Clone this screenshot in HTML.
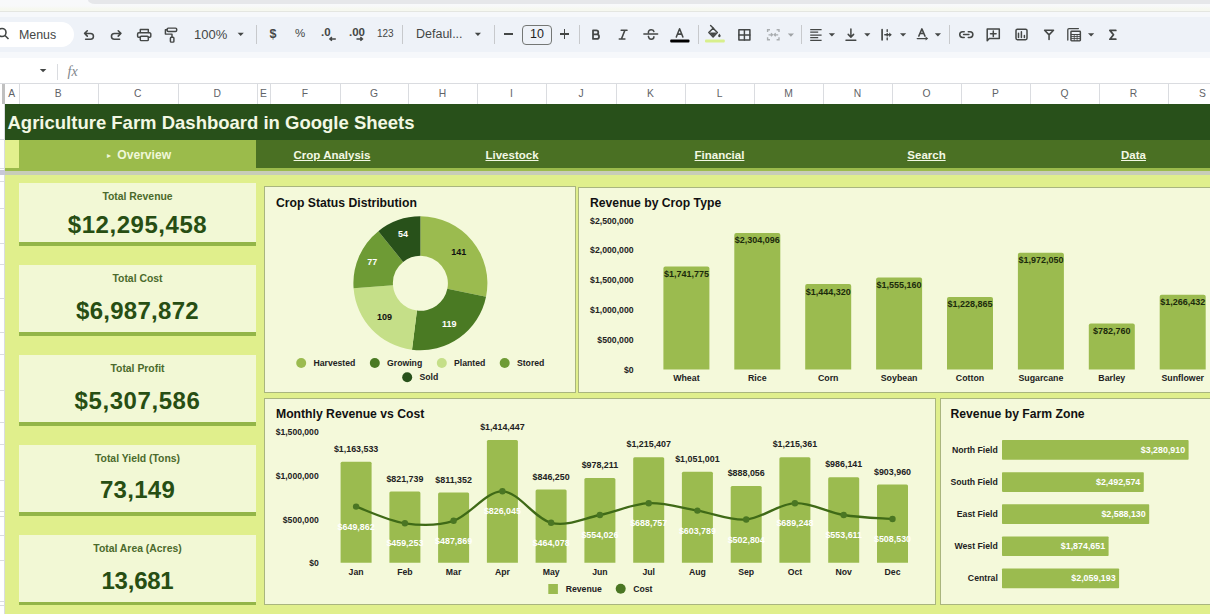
<!DOCTYPE html><html><head><meta charset="utf-8"><style>
*{box-sizing:border-box}
body{margin:0;width:1210px;height:614px;overflow:hidden;position:relative;background:#fff;font-family:"Liberation Sans",sans-serif}
.a{position:absolute}
.t{position:absolute;white-space:nowrap;line-height:1}
.ic{position:absolute;overflow:visible}
</style></head><body>
<div class="a" style="left:0;top:0;width:1210px;height:11px;background:linear-gradient(#f8f9fb 0,#f8f9fa 6px,#f6f8f0 9px,#f6f8f0 11px)"></div>
<div class="a" style="left:88px;top:0;width:1122px;height:4px;background:#e6e7ea;border-bottom-left-radius:7px 4px"></div>
<div class="a" style="left:0;top:11px;width:1210px;height:1px;background:#e4e6e1"></div>
<div class="a" style="left:0;top:12px;width:1210px;height:46px;background:#f6f8fb"></div>
<div class="a" style="left:0;top:17px;width:1210px;height:35px;background:#eef2f8"></div>
<div class="a" style="left:-20px;top:22px;width:94px;height:25px;background:#fff;border-radius:13px"></div>
<svg class="ic" style="left:0;top:28px" width="10" height="14" viewBox="0 0 10 14"><circle cx="2" cy="4.5" r="4" fill="none" stroke="#444746" stroke-width="1.6"/><path d="M5 7.5 L8.5 11" stroke="#444746" stroke-width="1.6"/></svg>
<div class="t" style="left:19px;top:28.5px;font-size:12.4px;color:#444746">Menus</div>
<svg class="a" style="left:0;top:0" width="1210" height="60" viewBox="0 0 1210 60"><path d="M85.6 39.3 H90.5 A2.95 2.95 0 0 0 90.5 33.4 H84.6 M87.3 30.8 L84.6 33.4 L87.3 36.1" fill="none" stroke="#444746" stroke-width="1.55" stroke-linecap="round" stroke-linejoin="round"/><path d="M119.6 39.3 H114.4 A2.95 2.95 0 0 1 114.4 33.4 H120.9 M118.2 30.8 L120.9 33.4 L118.2 36.1" fill="none" stroke="#444746" stroke-width="1.55" stroke-linecap="round" stroke-linejoin="round"/><path d="M140.3 32.6 V29.4 H148.3 V32.6" fill="none" stroke="#444746" stroke-width="1.45" stroke-linecap="round" stroke-linejoin="round"/><path d="M140.2 37.3 H138.6 A1 1 0 0 1 137.6 36.3 V34 A1.2 1.2 0 0 1 138.8 32.8 H149.6 A1.2 1.2 0 0 1 150.8 34 V36.3 A1 1 0 0 1 149.8 37.3 H148.4" fill="none" stroke="#444746" stroke-width="1.45" stroke-linecap="round" stroke-linejoin="round"/><rect x="140.3" y="36.3" width="8" height="4.3" rx="0.9" fill="none" stroke="#444746" stroke-width="1.45" stroke-linecap="round" stroke-linejoin="round"/><rect x="167.1" y="28.1" width="9.6" height="3.4" rx="1.2" fill="none" stroke="#444746" stroke-width="1.45" stroke-linecap="round" stroke-linejoin="round"/><path d="M167.1 29.8 H165.4 V34.1 H172 V37.1" fill="none" stroke="#444746" stroke-width="1.45" stroke-linecap="round" stroke-linejoin="round"/><rect x="170.4" y="37.3" width="3.5" height="4.8" rx="0.9" fill="none" stroke="#444746" stroke-width="1.45" stroke-linecap="round" stroke-linejoin="round"/><path d="M237.6 32.8 H243.79999999999998 L240.7 36.099999999999994 Z" fill="#444746"/><path d="M474.8 32.8 H481.0 L477.90000000000003 36.099999999999994 Z" fill="#444746"/><path d="M787.8 33.4 H794.0 L790.9 36.699999999999996 Z" fill="#9fa3a6"/><path d="M828.8 33.2 H835.0 L831.9 36.5 Z" fill="#444746"/><path d="M864.2 33.2 H870.4000000000001 L867.3000000000001 36.5 Z" fill="#444746"/><path d="M900 33.2 H906.2 L903.1 36.5 Z" fill="#444746"/><path d="M934.8 33.2 H941.0 L937.9 36.5 Z" fill="#444746"/><path d="M1088 33.2 H1094.2 L1091.1 36.5 Z" fill="#444746"/><path d="M643.9 34.1 H657.6" fill="none" stroke="#444746" stroke-width="1.5" stroke-linecap="round" stroke-linejoin="round"/><path d="M648.4 32.9 C648.2 30.8 649.6 29.8 651.1 29.8 C652.5 29.8 653.6 30.4 653.9 31.5" fill="none" stroke="#444746" stroke-width="1.55" stroke-linecap="round" stroke-linejoin="round"/><path d="M648.4 36.4 C648.8 38.5 650 39.3 651.2 39.3 C652.8 39.3 653.9 38.2 653.9 36.8" fill="none" stroke="#444746" stroke-width="1.55" stroke-linecap="round" stroke-linejoin="round"/><path d="M593 30.4 V38.9 H596.8 A2.25 2.25 0 0 0 596.8 34.4 H593 M593 34.4 H596.3 A2 2 0 0 0 596.3 30.4 H593" fill="none" stroke="#444746" stroke-width="1.75" stroke-linecap="round" stroke-linejoin="round"/><path d="M621.2 30.3 H627 M619.3 39 H624.9 M624.9 30.3 L621.4 39" fill="none" stroke="#444746" stroke-width="1.6" stroke-linecap="round" stroke-linejoin="round"/><path d="M676.3 37 L679.6 28.7 L682.9 37 M677.5 34.1 H681.7" fill="none" stroke="#444746" stroke-width="1.55" stroke-linecap="round" stroke-linejoin="round"/><rect x="670.2" y="39.4" width="19.3" height="3" rx="1" fill="#000"/><path d="M708.8 32.6 L713.1 28.3 L717.4 32.6 L713.1 36.9 Z" fill="none" stroke="#444746" stroke-width="1.45" stroke-linecap="round" stroke-linejoin="round"/><path d="M709.3 32.6 H716.9 L713.1 36.4 Z" fill="#444746"/><path d="M710.6 25.6 L713.6 28.6" fill="none" stroke="#444746" stroke-width="1.45" stroke-linecap="round" stroke-linejoin="round"/><path d="M719.4 33.6 L718.3 35.3 A1.25 1.25 0 1 0 720.5 35.3 Z" fill="#444746"/><rect x="705" y="39.6" width="19.8" height="3" rx="1" fill="#d8ef8c"/><rect x="738.9" y="29.8" width="11" height="10.2" fill="none" stroke="#444746" stroke-width="1.55" stroke-linecap="round" stroke-linejoin="round"/><path d="M744.4 29.8 V40 M738.9 34.9 H749.9" fill="none" stroke="#444746" stroke-width="1.45" stroke-linecap="round" stroke-linejoin="round"/><path d="M767.6 32 V29.7 H770 M776.6 29.7 H779 V32 M779 37.3 V39.8 H776.6 M770 39.8 H767.6 V37.3" fill="none" stroke="#a9adb0" stroke-width="1.4"/><path d="M768.5 34.8 H772 M771 33.3 L772.5 34.8 L771 36.3 M778.2 34.8 H774.7 M775.7 33.3 L774.2 34.8 L775.7 36.3" fill="none" stroke="#a9adb0" stroke-width="1.3"/><path d="M810.2 29.5 H821.6 M810.2 32.2 H818.2 M810.2 35 H821.6 M810.2 37.7 H818.2 M810.2 40.4 H821.6" fill="none" stroke="#444746" stroke-width="1.25"/><path d="M850.9 29 V37 M848.2 34.4 L850.9 37.1 L853.6 34.4 M846 40.3 H855.8" fill="none" stroke="#444746" stroke-width="1.5" stroke-linecap="round" stroke-linejoin="round"/><path d="M882.1 29.7 V39.8" fill="none" stroke="#444746" stroke-width="1.7" stroke-linecap="round" stroke-linejoin="round"/><path d="M887.2 29.8 V31.4 M887.2 33.4 V35.9 M887.2 37.9 V39.7" fill="none" stroke="#444746" stroke-width="1.4" stroke-linecap="round" stroke-linejoin="round"/><path d="M884.8 34.7 H889.6" fill="none" stroke="#444746" stroke-width="1.4" stroke-linecap="round" stroke-linejoin="round"/><path d="M889.2 32.5 L891.8 34.7 L889.2 36.9 Z" fill="#444746"/><path d="M918.8 36.1 L921.9 28.9 L925 36.1 M919.9 33.6 H923.9" fill="none" stroke="#444746" stroke-width="1.5" stroke-linecap="round" stroke-linejoin="round"/><path d="M917.3 38.6 H926" fill="none" stroke="#444746" stroke-width="1.4" stroke-linecap="round" stroke-linejoin="round"/><path d="M925.6 36.6 L928.2 38.6 L925.6 40.6 Z" fill="#444746"/><path d="M964.2 31.7 H962.6 A2.85 2.85 0 0 0 962.6 37.4 H964.2 M968.3 31.7 H970 A2.85 2.85 0 0 1 970 37.4 H968.3 M963.6 34.55 H968.9" fill="none" stroke="#444746" stroke-width="1.55" stroke-linecap="round" stroke-linejoin="round"/><path d="M987.2 40.7 V29.1 H999.3 V38.4 H989.3 Z" fill="none" stroke="#444746" stroke-width="1.5" stroke-linecap="round" stroke-linejoin="round"/><path d="M993.3 31 V36.6 M990.5 33.8 H996.1" fill="none" stroke="#444746" stroke-width="1.5" stroke-linecap="round" stroke-linejoin="round"/><rect x="1016" y="29.2" width="11" height="10.5" rx="1.4" fill="none" stroke="#444746" stroke-width="1.5" stroke-linecap="round" stroke-linejoin="round"/><path d="M1018.5 33.2 V37.5 M1021.4 31.8 V37.5 M1024.4 35.6 V37.5" fill="none" stroke="#444746" stroke-width="1.5" stroke-linecap="round" stroke-linejoin="round"/><path d="M1044.6 30.3 H1053.5 L1049.05 34.9 Z M1049.05 34.9 V39.5" fill="none" stroke="#444746" stroke-width="1.55" stroke-linecap="round" stroke-linejoin="round"/><path d="M1067.8 40 V29.8 A1.2 1.2 0 0 1 1069 28.6 H1078.4" fill="none" stroke="#444746" stroke-width="1.3" stroke-linecap="round" stroke-linejoin="round"/><rect x="1070.2" y="30.5" width="10.9" height="11" rx="1.4" fill="#444746"/><rect x="1071.7" y="32" width="7.9" height="2" fill="#eef2f8"/><rect x="1071.7" y="35.050000000000004" width="2.1" height="1.1" fill="#eef2f8"/><rect x="1074.6" y="35.050000000000004" width="2.1" height="1.1" fill="#eef2f8"/><rect x="1077.5" y="35.050000000000004" width="2.1" height="1.1" fill="#eef2f8"/><rect x="1071.7" y="37.050000000000004" width="2.1" height="1.1" fill="#eef2f8"/><rect x="1074.6" y="37.050000000000004" width="2.1" height="1.1" fill="#eef2f8"/><rect x="1077.5" y="37.050000000000004" width="2.1" height="1.1" fill="#eef2f8"/><rect x="1071.7" y="39.050000000000004" width="2.1" height="1.1" fill="#eef2f8"/><rect x="1074.6" y="39.050000000000004" width="2.1" height="1.1" fill="#eef2f8"/><rect x="1077.5" y="39.050000000000004" width="2.1" height="1.1" fill="#eef2f8"/><path d="M1115.8 30.4 H1109.9 L1113.5 34.8 L1109.9 39.2 H1115.8" fill="none" stroke="#444746" stroke-width="1.8" stroke-linecap="round" stroke-linejoin="round"/></svg>
<div class="t" style="left:194px;top:28px;font-size:13px;color:#444746">100%</div>
<div class="a" style="left:256px;top:25px;width:1px;height:19px;background:#c7c9cc"></div>
<div class="a" style="left:402px;top:25px;width:1px;height:19px;background:#c7c9cc"></div>
<div class="a" style="left:494px;top:25px;width:1px;height:19px;background:#c7c9cc"></div>
<div class="a" style="left:579px;top:25px;width:1px;height:19px;background:#c7c9cc"></div>
<div class="a" style="left:698px;top:25px;width:1px;height:19px;background:#c7c9cc"></div>
<div class="a" style="left:801px;top:25px;width:1px;height:19px;background:#c7c9cc"></div>
<div class="a" style="left:949px;top:25px;width:1px;height:19px;background:#c7c9cc"></div>
<div class="t" style="left:269.5px;top:27.5px;font-size:12.5px;color:#444746;font-weight:bold;-webkit-text-stroke:0">$</div>
<div class="t" style="left:295px;top:28px;font-size:11.5px;color:#444746">%</div>
<div class="t" style="left:321px;top:27px;font-size:11.5px;font-weight:bold;color:#444746">.0</div>
<svg class="a" style="left:0;top:0" width="1210" height="60" viewBox="0 0 1210 60"><path d="M335.8 38.9 H330 M331.9 37.1 L329.9 38.9 L331.9 40.7" fill="none" stroke="#444746" stroke-width="1.5"/><path d="M356.5 38.9 H362.4 M360.4 37.1 L362.4 38.9 L360.4 40.7" fill="none" stroke="#444746" stroke-width="1.5"/></svg>
<div class="t" style="left:349px;top:27px;font-size:11.5px;font-weight:bold;color:#444746">.00</div>
<div class="t" style="left:377px;top:29.3px;font-size:10px;color:#444746">123</div>
<div class="t" style="left:416px;top:27.7px;font-size:12.5px;color:#444746">Defaul...</div>
<div class="a" style="left:503.8px;top:33.4px;width:9px;height:1.25px;background:#444746"></div>
<div class="a" style="left:522px;top:24.5px;width:30px;height:20px;border:1px solid #747775;border-radius:4px"></div>
<div class="t" style="left:530px;top:28px;font-size:12.5px;color:#1f1f1f">10</div>
<div class="a" style="left:559.6px;top:33.4px;width:9.4px;height:1.25px;background:#444746"></div>
<div class="a" style="left:563.7px;top:29.3px;width:1.25px;height:9.4px;background:#444746"></div>
<div class="a" style="left:0;top:83px;width:1210px;height:1px;background:#dadce0"></div>
<svg class="a" style="left:0;top:60px" width="60" height="20" viewBox="0 60 60 20"><path d="M39.8 69 H46.4 L43.1 72.2 Z" fill="#444746"/></svg>
<div class="a" style="left:57px;top:64px;width:1px;height:16px;background:#dadce0"></div>
<div class="t" style="left:67.5px;top:64.5px;font-size:14px;font-style:italic;font-family:'Liberation Serif',serif;color:#80868b">fx</div>
<div class="a" style="left:0;top:84px;width:1210px;height:20px;background:#fff"></div>
<div class="a" style="left:2px;top:84px;width:3px;height:20px;background:#c0c0c0"></div>
<div class="a" style="left:18.5px;top:84px;width:1px;height:20px;background:#dadce0"></div>
<div class="t" style="left:5px;width:13.5px;top:89.1px;text-align:center;font-size:10.3px;color:#5f6368">A</div>
<div class="a" style="left:98px;top:84px;width:1px;height:20px;background:#dadce0"></div>
<div class="t" style="left:18.5px;width:79.5px;top:89.1px;text-align:center;font-size:10.3px;color:#5f6368">B</div>
<div class="a" style="left:177.5px;top:84px;width:1px;height:20px;background:#dadce0"></div>
<div class="t" style="left:98px;width:79.5px;top:89.1px;text-align:center;font-size:10.3px;color:#5f6368">C</div>
<div class="a" style="left:257px;top:84px;width:1px;height:20px;background:#dadce0"></div>
<div class="t" style="left:177.5px;width:79.5px;top:89.1px;text-align:center;font-size:10.3px;color:#5f6368">D</div>
<div class="a" style="left:270px;top:84px;width:1px;height:20px;background:#dadce0"></div>
<div class="t" style="left:257px;width:13px;top:89.1px;text-align:center;font-size:10.3px;color:#5f6368">E</div>
<div class="a" style="left:340px;top:84px;width:1px;height:20px;background:#dadce0"></div>
<div class="t" style="left:270px;width:70px;top:89.1px;text-align:center;font-size:10.3px;color:#5f6368">F</div>
<div class="a" style="left:408px;top:84px;width:1px;height:20px;background:#dadce0"></div>
<div class="t" style="left:340px;width:68px;top:89.1px;text-align:center;font-size:10.3px;color:#5f6368">G</div>
<div class="a" style="left:477px;top:84px;width:1px;height:20px;background:#dadce0"></div>
<div class="t" style="left:408px;width:69px;top:89.1px;text-align:center;font-size:10.3px;color:#5f6368">H</div>
<div class="a" style="left:546px;top:84px;width:1px;height:20px;background:#dadce0"></div>
<div class="t" style="left:477px;width:69px;top:89.1px;text-align:center;font-size:10.3px;color:#5f6368">I</div>
<div class="a" style="left:616px;top:84px;width:1px;height:20px;background:#dadce0"></div>
<div class="t" style="left:546px;width:70px;top:89.1px;text-align:center;font-size:10.3px;color:#5f6368">J</div>
<div class="a" style="left:685px;top:84px;width:1px;height:20px;background:#dadce0"></div>
<div class="t" style="left:616px;width:69px;top:89.1px;text-align:center;font-size:10.3px;color:#5f6368">K</div>
<div class="a" style="left:754px;top:84px;width:1px;height:20px;background:#dadce0"></div>
<div class="t" style="left:685px;width:69px;top:89.1px;text-align:center;font-size:10.3px;color:#5f6368">L</div>
<div class="a" style="left:823px;top:84px;width:1px;height:20px;background:#dadce0"></div>
<div class="t" style="left:754px;width:69px;top:89.1px;text-align:center;font-size:10.3px;color:#5f6368">M</div>
<div class="a" style="left:892px;top:84px;width:1px;height:20px;background:#dadce0"></div>
<div class="t" style="left:823px;width:69px;top:89.1px;text-align:center;font-size:10.3px;color:#5f6368">N</div>
<div class="a" style="left:961px;top:84px;width:1px;height:20px;background:#dadce0"></div>
<div class="t" style="left:892px;width:69px;top:89.1px;text-align:center;font-size:10.3px;color:#5f6368">O</div>
<div class="a" style="left:1030px;top:84px;width:1px;height:20px;background:#dadce0"></div>
<div class="t" style="left:961px;width:69px;top:89.1px;text-align:center;font-size:10.3px;color:#5f6368">P</div>
<div class="a" style="left:1099px;top:84px;width:1px;height:20px;background:#dadce0"></div>
<div class="t" style="left:1030px;width:69px;top:89.1px;text-align:center;font-size:10.3px;color:#5f6368">Q</div>
<div class="a" style="left:1168px;top:84px;width:1px;height:20px;background:#dadce0"></div>
<div class="t" style="left:1099px;width:69px;top:89.1px;text-align:center;font-size:10.3px;color:#5f6368">R</div>
<div class="a" style="left:1237px;top:84px;width:1px;height:20px;background:#dadce0"></div>
<div class="t" style="left:1168px;width:69px;top:89.1px;text-align:center;font-size:10.3px;color:#5f6368">S</div>
<div class="a" style="left:0;top:104px;width:5px;height:510px;background:#fff"></div>
<div class="a" style="left:0;top:139px;width:5px;height:1px;background:#dadce0"></div>
<div class="a" style="left:0;top:168px;width:5px;height:1px;background:#dadce0"></div>
<div class="a" style="left:0;top:181px;width:5px;height:1px;background:#dadce0"></div>
<div class="a" style="left:0;top:208px;width:5px;height:1px;background:#dadce0"></div>
<div class="a" style="left:0;top:243px;width:5px;height:1px;background:#dadce0"></div>
<div class="a" style="left:0;top:264px;width:5px;height:1px;background:#dadce0"></div>
<div class="a" style="left:0;top:298px;width:5px;height:1px;background:#dadce0"></div>
<div class="a" style="left:0;top:332px;width:5px;height:1px;background:#dadce0"></div>
<div class="a" style="left:0;top:354px;width:5px;height:1px;background:#dadce0"></div>
<div class="a" style="left:0;top:390px;width:5px;height:1px;background:#dadce0"></div>
<div class="a" style="left:0;top:422px;width:5px;height:1px;background:#dadce0"></div>
<div class="a" style="left:0;top:444px;width:5px;height:1px;background:#dadce0"></div>
<div class="a" style="left:0;top:480px;width:5px;height:1px;background:#dadce0"></div>
<div class="a" style="left:0;top:511px;width:5px;height:1px;background:#dadce0"></div>
<div class="a" style="left:0;top:516px;width:5px;height:1px;background:#dadce0"></div>
<div class="a" style="left:0;top:535px;width:5px;height:1px;background:#dadce0"></div>
<div class="a" style="left:0;top:560px;width:5px;height:1px;background:#dadce0"></div>
<div class="a" style="left:0;top:601px;width:5px;height:1px;background:#dadce0"></div>
<div class="a" style="left:0;top:605px;width:5px;height:1px;background:#dadce0"></div>
<div class="a" style="left:4px;top:104px;width:1px;height:510px;background:#dadce0"></div>
<div class="a" style="left:0;top:170px;width:5px;height:5px;background:#c8c8d8"></div>
<div class="a" style="left:5px;top:104px;width:1205px;height:36px;background:#28501a"></div>
<div class="t" style="left:7.5px;top:114px;font-size:18.5px;font-weight:bold;color:#f3f8e4">Agriculture Farm Dashboard in Google Sheets</div>
<div class="a" style="left:5px;top:140px;width:1205px;height:30.5px;background:#9bbb4b"></div>
<div class="a" style="left:5px;top:140px;width:13.5px;height:28px;background:#e2f08d"></div>
<div class="a" style="left:256px;top:140px;width:954px;height:27.6px;background:#4a7023"></div>
<div class="t" style="left:107.3px;top:150.8px;font-size:8.3px;color:#f0f7d8">&#9656;</div>
<div class="t" style="left:117.3px;top:149.3px;font-size:12.1px;font-weight:bold;color:#f0f7d8">Overview</div>
<div class="t" style="left:256px;width:152px;top:149.5px;text-align:center;font-size:11.5px;font-weight:bold;color:#f3f8e4;text-decoration:underline">Crop Analysis</div>
<div class="t" style="left:408px;width:208px;top:149.5px;text-align:center;font-size:11.5px;font-weight:bold;color:#f3f8e4;text-decoration:underline">Livestock</div>
<div class="t" style="left:616px;width:207px;top:149.5px;text-align:center;font-size:11.5px;font-weight:bold;color:#f3f8e4;text-decoration:underline">Financial</div>
<div class="t" style="left:823px;width:207px;top:149.5px;text-align:center;font-size:11.5px;font-weight:bold;color:#f3f8e4;text-decoration:underline">Search</div>
<div class="t" style="left:1030px;width:207px;top:149.5px;text-align:center;font-size:11.5px;font-weight:bold;color:#f3f8e4;text-decoration:underline">Data</div>
<div class="a" style="left:5px;top:170.5px;width:1205px;height:4.5px;background:#c8cdb8"></div>
<div class="a" style="left:5px;top:175px;width:1205px;height:439px;background:#e0ef8c"></div>
<div class="a" style="left:19px;top:183px;width:237px;height:59px;background:#f2f8d5"></div>
<div class="a" style="left:19px;top:242px;width:237px;height:4px;background:#93b548"></div>
<div class="t" style="left:19px;width:237px;top:192px;text-align:center;font-size:10.4px;font-weight:bold;color:#4b6a2c">Total Revenue</div>
<div class="t" style="left:19px;width:237px;top:213.3px;text-align:center;font-size:24px;letter-spacing:0.55px;font-weight:bold;color:#274e13">$12,295,458</div>
<div class="a" style="left:19px;top:265px;width:237px;height:67px;background:#f2f8d5"></div>
<div class="a" style="left:19px;top:332px;width:237px;height:4px;background:#93b548"></div>
<div class="t" style="left:19px;width:237px;top:274px;text-align:center;font-size:10.4px;font-weight:bold;color:#4b6a2c">Total Cost</div>
<div class="t" style="left:19px;width:237px;top:298.7px;text-align:center;font-size:24px;letter-spacing:0.27px;font-weight:bold;color:#274e13">$6,987,872</div>
<div class="a" style="left:19px;top:355px;width:237px;height:67px;background:#f2f8d5"></div>
<div class="a" style="left:19px;top:422px;width:237px;height:4px;background:#93b548"></div>
<div class="t" style="left:19px;width:237px;top:364px;text-align:center;font-size:10.4px;font-weight:bold;color:#4b6a2c">Total Profit</div>
<div class="t" style="left:19px;width:237px;top:389.2px;text-align:center;font-size:24px;letter-spacing:0.58px;font-weight:bold;color:#274e13">$5,307,586</div>
<div class="a" style="left:19px;top:445px;width:237px;height:66.69999999999999px;background:#f2f8d5"></div>
<div class="a" style="left:19px;top:511.7px;width:237px;height:4.000000000000057px;background:#93b548"></div>
<div class="t" style="left:19px;width:237px;top:454px;text-align:center;font-size:10.4px;font-weight:bold;color:#4b6a2c">Total Yield (Tons)</div>
<div class="t" style="left:19px;width:237px;top:477.7px;text-align:center;font-size:24px;letter-spacing:0.3px;font-weight:bold;color:#274e13">73,149</div>
<div class="a" style="left:19px;top:535px;width:237px;height:66.5px;background:#f2f8d5"></div>
<div class="a" style="left:19px;top:601.5px;width:237px;height:3.0px;background:#93b548"></div>
<div class="t" style="left:19px;width:237px;top:544px;text-align:center;font-size:10.4px;font-weight:bold;color:#4b6a2c">Total Area (Acres)</div>
<div class="t" style="left:19px;width:237px;top:568.5px;text-align:center;font-size:24px;letter-spacing:-0.24px;font-weight:bold;color:#274e13">13,681</div>
<div class="a" style="left:264px;top:186px;width:312px;height:207px;background:#f4f9da;border:1px solid #a9b57e"></div>
<div class="a" style="left:578.3px;top:186.6px;width:636.7px;height:206.9px;background:#f4f9da;border:1px solid #a9b57e"></div>
<div class="a" style="left:264px;top:397.5px;width:671.5px;height:207.0px;background:#f4f9da;border:1px solid #a9b57e"></div>
<div class="a" style="left:939.5px;top:397.5px;width:275.5px;height:207.0px;background:#f4f9da;border:1px solid #a9b57e"></div>
<svg class="a" style="left:0;top:0" width="1210" height="614" viewBox="0 0 1210 614" font-family="Liberation Sans, sans-serif"><text x="276.0" y="202.5" font-size="12.2" text-anchor="start" fill="#111" font-weight="bold" dominant-baseline="central">Crop Status Distribution</text><text x="590.0" y="203.0" font-size="12.2" text-anchor="start" fill="#111" font-weight="bold" dominant-baseline="central">Revenue by Crop Type</text><text x="276.0" y="413.8" font-size="12.2" text-anchor="start" fill="#111" font-weight="bold" dominant-baseline="central">Monthly Revenue vs Cost</text><text x="950.5" y="413.8" font-size="12.2" text-anchor="start" fill="#111" font-weight="bold" dominant-baseline="central">Revenue by Farm Zone</text><path d="M420.40 216.30 A67 67 0 0 1 486.05 296.68 L447.35 288.79 A27.5 27.5 0 0 0 420.40 255.80Z" fill="#9bbb4f"/><text x="458.7" y="252.0" font-size="9" text-anchor="middle" fill="#111" font-weight="bold" dominant-baseline="central">141</text><path d="M486.05 296.68 A67 67 0 0 1 412.00 349.77 L416.95 310.58 A27.5 27.5 0 0 0 447.35 288.79Z" fill="#4a7a23"/><text x="449.2" y="323.5" font-size="9" text-anchor="middle" fill="#fff" font-weight="bold" dominant-baseline="central">119</text><path d="M412.00 349.77 A67 67 0 0 1 353.59 288.35 L392.98 285.37 A27.5 27.5 0 0 0 416.95 310.58Z" fill="#c5df88"/><text x="384.5" y="317.4" font-size="9" text-anchor="middle" fill="#111" font-weight="bold" dominant-baseline="central">109</text><path d="M353.59 288.35 A67 67 0 0 1 378.34 231.14 L403.14 261.89 A27.5 27.5 0 0 0 392.98 285.37Z" fill="#6e9b35"/><text x="372.2" y="262.4" font-size="9" text-anchor="middle" fill="#fff" font-weight="bold" dominant-baseline="central">77</text><path d="M378.34 231.14 A67 67 0 0 1 420.40 216.30 L420.40 255.80 A27.5 27.5 0 0 0 403.14 261.89Z" fill="#28511a"/><text x="402.9" y="233.8" font-size="9" text-anchor="middle" fill="#fff" font-weight="bold" dominant-baseline="central">54</text><circle cx="301.2" cy="363" r="5" fill="#9bbb4f"/><text x="313.4" y="363.0" font-size="8.7" text-anchor="start" fill="#222" font-weight="bold" dominant-baseline="central">Harvested</text><circle cx="374.8" cy="363" r="5" fill="#4a7a23"/><text x="387.0" y="363.0" font-size="8.7" text-anchor="start" fill="#222" font-weight="bold" dominant-baseline="central">Growing</text><circle cx="441.8" cy="363" r="5" fill="#c5df88"/><text x="454.0" y="363.0" font-size="8.7" text-anchor="start" fill="#222" font-weight="bold" dominant-baseline="central">Planted</text><circle cx="504.7" cy="363" r="5" fill="#6e9b35"/><text x="516.9" y="363.0" font-size="8.7" text-anchor="start" fill="#222" font-weight="bold" dominant-baseline="central">Stored</text><circle cx="407.2" cy="377.2" r="5" fill="#28511a"/><text x="419.4" y="377.2" font-size="8.7" text-anchor="start" fill="#222" font-weight="bold" dominant-baseline="central">Sold</text><text x="633.6" y="220.5" font-size="8.7" text-anchor="end" fill="#222" font-weight="bold" dominant-baseline="central">$2,500,000</text><text x="633.6" y="250.4" font-size="8.7" text-anchor="end" fill="#222" font-weight="bold" dominant-baseline="central">$2,000,000</text><text x="633.6" y="280.3" font-size="8.7" text-anchor="end" fill="#222" font-weight="bold" dominant-baseline="central">$1,500,000</text><text x="633.6" y="310.2" font-size="8.7" text-anchor="end" fill="#222" font-weight="bold" dominant-baseline="central">$1,000,000</text><text x="633.6" y="340.1" font-size="8.7" text-anchor="end" fill="#222" font-weight="bold" dominant-baseline="central">$500,000</text><text x="633.6" y="370.0" font-size="8.7" text-anchor="end" fill="#222" font-weight="bold" dominant-baseline="central">$0</text><path d="M663.4 369.5 V268.5 Q663.4 266.5 665.4 266.5 H707.4 Q709.4 266.5 709.4 268.5 V369.5Z" fill="#9bbb4f"/><text x="686.4" y="273.9" font-size="9" text-anchor="middle" fill="#1b2a0c" font-weight="bold" dominant-baseline="central">$1,741,775</text><text x="686.4" y="378.4" font-size="8.8" text-anchor="middle" fill="#222" font-weight="bold" dominant-baseline="central">Wheat</text><path d="M734.3 369.5 V235.0 Q734.3 233.0 736.3 233.0 H778.3 Q780.3 233.0 780.3 235.0 V369.5Z" fill="#9bbb4f"/><text x="757.3" y="240.4" font-size="9" text-anchor="middle" fill="#1b2a0c" font-weight="bold" dominant-baseline="central">$2,304,096</text><text x="757.3" y="378.4" font-size="8.8" text-anchor="middle" fill="#222" font-weight="bold" dominant-baseline="central">Rice</text><path d="M805.2 369.5 V286.1 Q805.2 284.1 807.2 284.1 H849.2 Q851.2 284.1 851.2 286.1 V369.5Z" fill="#9bbb4f"/><text x="828.2" y="291.5" font-size="9" text-anchor="middle" fill="#1b2a0c" font-weight="bold" dominant-baseline="central">$1,444,320</text><text x="828.2" y="378.4" font-size="8.8" text-anchor="middle" fill="#222" font-weight="bold" dominant-baseline="central">Corn</text><path d="M876.1 369.5 V279.5 Q876.1 277.5 878.1 277.5 H920.1 Q922.1 277.5 922.1 279.5 V369.5Z" fill="#9bbb4f"/><text x="899.1" y="284.9" font-size="9" text-anchor="middle" fill="#1b2a0c" font-weight="bold" dominant-baseline="central">$1,555,160</text><text x="899.1" y="378.4" font-size="8.8" text-anchor="middle" fill="#222" font-weight="bold" dominant-baseline="central">Soybean</text><path d="M947.0 369.5 V298.9 Q947.0 296.9 949.0 296.9 H991.0 Q993.0 296.9 993.0 298.9 V369.5Z" fill="#9bbb4f"/><text x="970.0" y="304.3" font-size="9" text-anchor="middle" fill="#1b2a0c" font-weight="bold" dominant-baseline="central">$1,228,865</text><text x="970.0" y="378.4" font-size="8.8" text-anchor="middle" fill="#222" font-weight="bold" dominant-baseline="central">Cotton</text><path d="M1017.9 369.5 V254.8 Q1017.9 252.8 1019.9 252.8 H1061.9 Q1063.9 252.8 1063.9 254.8 V369.5Z" fill="#9bbb4f"/><text x="1040.9" y="260.2" font-size="9" text-anchor="middle" fill="#1b2a0c" font-weight="bold" dominant-baseline="central">$1,972,050</text><text x="1040.9" y="378.4" font-size="8.8" text-anchor="middle" fill="#222" font-weight="bold" dominant-baseline="central">Sugarcane</text><path d="M1088.8 369.5 V325.5 Q1088.8 323.5 1090.8 323.5 H1132.8 Q1134.8 323.5 1134.8 325.5 V369.5Z" fill="#9bbb4f"/><text x="1111.8" y="330.9" font-size="9" text-anchor="middle" fill="#1b2a0c" font-weight="bold" dominant-baseline="central">$782,760</text><text x="1111.8" y="378.4" font-size="8.8" text-anchor="middle" fill="#222" font-weight="bold" dominant-baseline="central">Barley</text><path d="M1159.7 369.5 V296.7 Q1159.7 294.7 1161.7 294.7 H1203.7 Q1205.7 294.7 1205.7 296.7 V369.5Z" fill="#9bbb4f"/><text x="1182.7" y="302.1" font-size="9" text-anchor="middle" fill="#1b2a0c" font-weight="bold" dominant-baseline="central">$1,266,432</text><text x="1182.7" y="378.4" font-size="8.8" text-anchor="middle" fill="#222" font-weight="bold" dominant-baseline="central">Sunflower</text><text x="318.7" y="432.4" font-size="8.6" text-anchor="end" fill="#222" font-weight="bold" dominant-baseline="central">$1,500,000</text><text x="318.7" y="476.0" font-size="8.6" text-anchor="end" fill="#222" font-weight="bold" dominant-baseline="central">$1,000,000</text><text x="318.7" y="519.6" font-size="8.6" text-anchor="end" fill="#222" font-weight="bold" dominant-baseline="central">$500,000</text><text x="318.7" y="563.2" font-size="8.6" text-anchor="end" fill="#222" font-weight="bold" dominant-baseline="central">$0</text><path d="M340.6 562.7 V463.3 Q340.6 461.8 342.1 461.8 H370.1 Q371.6 461.8 371.6 463.3 V562.7Z" fill="#9bbb4f"/><text x="356.1" y="448.8" font-size="8.9" text-anchor="middle" fill="#222" font-weight="bold" dominant-baseline="central">$1,163,533</text><text x="356.1" y="572.3" font-size="8.7" text-anchor="middle" fill="#222" font-weight="bold" dominant-baseline="central">Jan</text><path d="M389.4 562.7 V493.1 Q389.4 491.6 390.9 491.6 H418.9 Q420.4 491.6 420.4 493.1 V562.7Z" fill="#9bbb4f"/><text x="404.9" y="478.6" font-size="8.9" text-anchor="middle" fill="#222" font-weight="bold" dominant-baseline="central">$821,739</text><text x="404.9" y="572.3" font-size="8.7" text-anchor="middle" fill="#222" font-weight="bold" dominant-baseline="central">Feb</text><path d="M438.1 562.7 V494.1 Q438.1 492.6 439.6 492.6 H467.6 Q469.1 492.6 469.1 494.1 V562.7Z" fill="#9bbb4f"/><text x="453.6" y="479.6" font-size="8.9" text-anchor="middle" fill="#222" font-weight="bold" dominant-baseline="central">$811,352</text><text x="453.6" y="572.3" font-size="8.7" text-anchor="middle" fill="#222" font-weight="bold" dominant-baseline="central">Mar</text><path d="M486.9 562.7 V441.5 Q486.9 440.0 488.4 440.0 H516.4 Q517.9 440.0 517.9 441.5 V562.7Z" fill="#9bbb4f"/><text x="502.4" y="427.0" font-size="8.9" text-anchor="middle" fill="#222" font-weight="bold" dominant-baseline="central">$1,414,447</text><text x="502.4" y="572.3" font-size="8.7" text-anchor="middle" fill="#222" font-weight="bold" dominant-baseline="central">Apr</text><path d="M535.6 562.7 V491.0 Q535.6 489.5 537.1 489.5 H565.1 Q566.6 489.5 566.6 491.0 V562.7Z" fill="#9bbb4f"/><text x="551.1" y="476.5" font-size="8.9" text-anchor="middle" fill="#222" font-weight="bold" dominant-baseline="central">$846,250</text><text x="551.1" y="572.3" font-size="8.7" text-anchor="middle" fill="#222" font-weight="bold" dominant-baseline="central">May</text><path d="M584.4 562.7 V479.5 Q584.4 478.0 585.9 478.0 H613.9 Q615.4 478.0 615.4 479.5 V562.7Z" fill="#9bbb4f"/><text x="599.9" y="465.0" font-size="8.9" text-anchor="middle" fill="#222" font-weight="bold" dominant-baseline="central">$978,211</text><text x="599.9" y="572.3" font-size="8.7" text-anchor="middle" fill="#222" font-weight="bold" dominant-baseline="central">Jun</text><path d="M633.2 562.7 V458.8 Q633.2 457.3 634.7 457.3 H662.7 Q664.2 457.3 664.2 458.8 V562.7Z" fill="#9bbb4f"/><text x="648.7" y="444.3" font-size="8.9" text-anchor="middle" fill="#222" font-weight="bold" dominant-baseline="central">$1,215,407</text><text x="648.7" y="572.3" font-size="8.7" text-anchor="middle" fill="#222" font-weight="bold" dominant-baseline="central">Jul</text><path d="M681.9 562.7 V473.2 Q681.9 471.7 683.4 471.7 H711.4 Q712.9 471.7 712.9 473.2 V562.7Z" fill="#9bbb4f"/><text x="697.4" y="458.7" font-size="8.9" text-anchor="middle" fill="#222" font-weight="bold" dominant-baseline="central">$1,051,001</text><text x="697.4" y="572.3" font-size="8.7" text-anchor="middle" fill="#222" font-weight="bold" dominant-baseline="central">Aug</text><path d="M730.7 562.7 V487.4 Q730.7 485.9 732.2 485.9 H760.2 Q761.7 485.9 761.7 487.4 V562.7Z" fill="#9bbb4f"/><text x="746.2" y="472.9" font-size="8.9" text-anchor="middle" fill="#222" font-weight="bold" dominant-baseline="central">$888,056</text><text x="746.2" y="572.3" font-size="8.7" text-anchor="middle" fill="#222" font-weight="bold" dominant-baseline="central">Sep</text><path d="M779.4 562.7 V458.8 Q779.4 457.3 780.9 457.3 H808.9 Q810.4 457.3 810.4 458.8 V562.7Z" fill="#9bbb4f"/><text x="794.9" y="444.3" font-size="8.9" text-anchor="middle" fill="#222" font-weight="bold" dominant-baseline="central">$1,215,361</text><text x="794.9" y="572.3" font-size="8.7" text-anchor="middle" fill="#222" font-weight="bold" dominant-baseline="central">Oct</text><path d="M828.2 562.7 V478.8 Q828.2 477.3 829.7 477.3 H857.7 Q859.2 477.3 859.2 478.8 V562.7Z" fill="#9bbb4f"/><text x="843.7" y="464.3" font-size="8.9" text-anchor="middle" fill="#222" font-weight="bold" dominant-baseline="central">$986,141</text><text x="843.7" y="572.3" font-size="8.7" text-anchor="middle" fill="#222" font-weight="bold" dominant-baseline="central">Nov</text><path d="M877.0 562.7 V486.0 Q877.0 484.5 878.5 484.5 H906.5 Q908.0 484.5 908.0 486.0 V562.7Z" fill="#9bbb4f"/><text x="892.5" y="471.5" font-size="8.9" text-anchor="middle" fill="#222" font-weight="bold" dominant-baseline="central">$903,960</text><text x="892.5" y="572.3" font-size="8.7" text-anchor="middle" fill="#222" font-weight="bold" dominant-baseline="central">Dec</text><path d="M356.1 506.6 C364.2 509.4 388.6 520.9 404.9 523.3 C421.1 525.6 437.4 526.1 453.6 520.8 C469.9 515.4 486.1 490.9 502.4 491.3 C518.6 491.6 534.9 518.9 551.1 522.8 C567.4 526.8 583.6 518.3 599.9 515.0 C616.2 511.7 632.4 504.0 648.7 503.2 C664.9 502.5 681.2 507.9 697.4 510.6 C713.7 513.4 729.9 520.7 746.2 519.5 C762.4 518.2 778.7 503.9 794.9 503.2 C811.2 502.5 827.4 512.4 843.7 515.0 C860.0 517.7 884.3 518.3 892.5 519.0" fill="none" stroke="#3f6a17" stroke-width="2.3"/><circle cx="356.1" cy="506.6" r="3.2" fill="#4a7623"/><text x="356.1" y="526.7" font-size="8.9" text-anchor="middle" fill="#fff" font-weight="bold" dominant-baseline="central">$649,862</text><circle cx="404.9" cy="523.3" r="3.2" fill="#4a7623"/><text x="404.9" y="543.4" font-size="8.9" text-anchor="middle" fill="#fff" font-weight="bold" dominant-baseline="central">$459,253</text><circle cx="453.6" cy="520.8" r="3.2" fill="#4a7623"/><text x="453.6" y="540.9" font-size="8.9" text-anchor="middle" fill="#fff" font-weight="bold" dominant-baseline="central">$487,869</text><circle cx="502.4" cy="491.3" r="3.2" fill="#4a7623"/><text x="502.4" y="511.4" font-size="8.9" text-anchor="middle" fill="#fff" font-weight="bold" dominant-baseline="central">$826,045</text><circle cx="551.1" cy="522.8" r="3.2" fill="#4a7623"/><text x="551.1" y="542.9" font-size="8.9" text-anchor="middle" fill="#fff" font-weight="bold" dominant-baseline="central">$464,078</text><circle cx="599.9" cy="515.0" r="3.2" fill="#4a7623"/><text x="599.9" y="535.1" font-size="8.9" text-anchor="middle" fill="#fff" font-weight="bold" dominant-baseline="central">$554,026</text><circle cx="648.7" cy="503.2" r="3.2" fill="#4a7623"/><text x="648.7" y="523.3" font-size="8.9" text-anchor="middle" fill="#fff" font-weight="bold" dominant-baseline="central">$688,757</text><circle cx="697.4" cy="510.6" r="3.2" fill="#4a7623"/><text x="697.4" y="530.7" font-size="8.9" text-anchor="middle" fill="#fff" font-weight="bold" dominant-baseline="central">$603,789</text><circle cx="746.2" cy="519.5" r="3.2" fill="#4a7623"/><text x="746.2" y="539.6" font-size="8.9" text-anchor="middle" fill="#fff" font-weight="bold" dominant-baseline="central">$502,804</text><circle cx="794.9" cy="503.2" r="3.2" fill="#4a7623"/><text x="794.9" y="523.3" font-size="8.9" text-anchor="middle" fill="#fff" font-weight="bold" dominant-baseline="central">$689,248</text><circle cx="843.7" cy="515.0" r="3.2" fill="#4a7623"/><text x="843.7" y="535.1" font-size="8.9" text-anchor="middle" fill="#fff" font-weight="bold" dominant-baseline="central">$553,611</text><circle cx="892.5" cy="519.0" r="3.2" fill="#4a7623"/><text x="892.5" y="539.1" font-size="8.9" text-anchor="middle" fill="#fff" font-weight="bold" dominant-baseline="central">$508,530</text><rect x="548.3" y="584" width="9.6" height="10" fill="#9bbb4f"/><text x="565.7" y="589.0" font-size="8.7" text-anchor="start" fill="#222" font-weight="bold" dominant-baseline="central">Revenue</text><circle cx="620.7" cy="588.7" r="5" fill="#4a7623"/><text x="633.2" y="589.0" font-size="8.7" text-anchor="start" fill="#222" font-weight="bold" dominant-baseline="central">Cost</text><rect x="1002" y="440.1" width="186.6" height="19.7" rx="0.8" fill="#9bbb4f"/><text x="997.8" y="449.6" font-size="8.7" text-anchor="end" fill="#222" font-weight="bold" dominant-baseline="central">North Field</text><text x="1185.1" y="449.6" font-size="8.85" text-anchor="end" fill="#fff" font-weight="bold" dominant-baseline="central">$3,280,910</text><rect x="1002" y="472.2" width="141.8" height="19.7" rx="0.8" fill="#9bbb4f"/><text x="997.8" y="481.7" font-size="8.7" text-anchor="end" fill="#222" font-weight="bold" dominant-baseline="central">South Field</text><text x="1140.3" y="481.7" font-size="8.85" text-anchor="end" fill="#fff" font-weight="bold" dominant-baseline="central">$2,492,574</text><rect x="1002" y="504.3" width="147.2" height="19.7" rx="0.8" fill="#9bbb4f"/><text x="997.8" y="513.8" font-size="8.7" text-anchor="end" fill="#222" font-weight="bold" dominant-baseline="central">East Field</text><text x="1145.7" y="513.8" font-size="8.85" text-anchor="end" fill="#fff" font-weight="bold" dominant-baseline="central">$2,588,130</text><rect x="1002" y="536.4" width="106.6" height="19.7" rx="0.8" fill="#9bbb4f"/><text x="997.8" y="545.9" font-size="8.7" text-anchor="end" fill="#222" font-weight="bold" dominant-baseline="central">West Field</text><text x="1105.1" y="545.9" font-size="8.85" text-anchor="end" fill="#fff" font-weight="bold" dominant-baseline="central">$1,874,651</text><rect x="1002" y="568.5" width="117.1" height="19.7" rx="0.8" fill="#9bbb4f"/><text x="997.8" y="578.0" font-size="8.7" text-anchor="end" fill="#222" font-weight="bold" dominant-baseline="central">Central</text><text x="1115.6" y="578.0" font-size="8.85" text-anchor="end" fill="#fff" font-weight="bold" dominant-baseline="central">$2,059,193</text></svg>
</body></html>
